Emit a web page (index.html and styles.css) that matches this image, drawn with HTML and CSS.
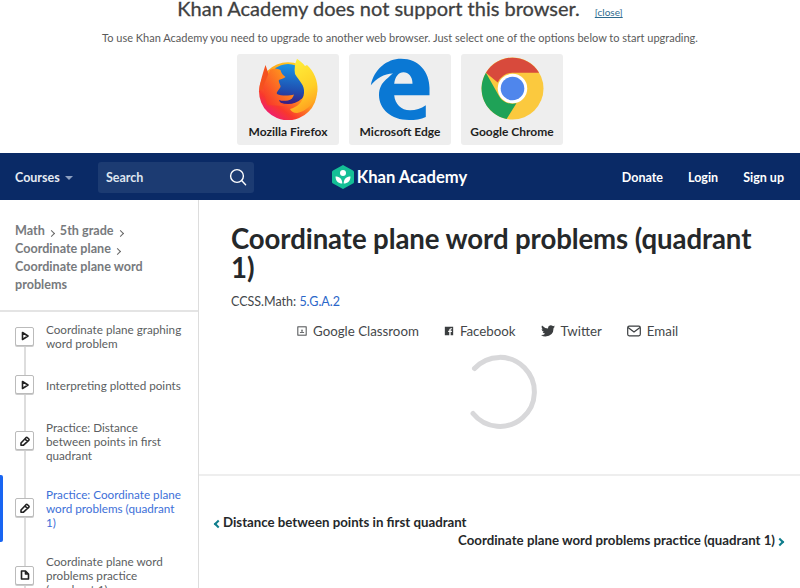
FILE: index.html
```html
<!DOCTYPE html>
<html lang="en">
<head>
<meta charset="utf-8">
<title>Coordinate plane word problems (quadrant 1)</title>
<link rel="stylesheet" href="styles.css">
</head>
<body>
<section class="banner">
  <div class="banner-head">
    <h2 class="banner-title">Khan Academy does not support this browser.</h2>
    <a class="banner-close">[close]</a>
  </div>
  <p class="banner-text">To use Khan Academy you need to upgrade to another web browser. Just select one of the options below to start upgrading.</p>
  <div class="browsers">
    <a class="browser">
      <svg class="browser-icon" viewBox="0 0 63 63">
        <defs>
          <linearGradient id="ff" x1="0.85" y1="0.15" x2="0.25" y2="0.95"><stop offset="0" stop-color="#ffd21f"/><stop offset="0.45" stop-color="#ff9a1f"/><stop offset="0.8" stop-color="#f9382c"/><stop offset="1" stop-color="#ee1f6e"/></linearGradient>
          <linearGradient id="fb" x1="0.6" y1="0" x2="0.5" y2="1"><stop offset="0" stop-color="#1a95e6"/><stop offset="0.65" stop-color="#1f4fb0"/><stop offset="1" stop-color="#3a1d80"/></linearGradient>
          <linearGradient id="fh" x1="0.8" y1="0.1" x2="0" y2="0.8"><stop offset="0" stop-color="#ff9e1c"/><stop offset="1" stop-color="#f8372b"/></linearGradient>
          <linearGradient id="fy" x1="0.3" y1="0" x2="0.6" y2="1"><stop offset="0" stop-color="#ffee3a"/><stop offset="0.6" stop-color="#ffcf26"/><stop offset="1" stop-color="#ff9a1f"/></linearGradient>
        </defs>
        <circle cx="31" cy="34.300" r="29" fill="url(#ff)"/>
        <path d="M8.500 8 C6 16 3 24 2.500 33 L16 30Z" fill="#f4511e"/>
        <circle cx="31" cy="27" r="20" fill="url(#fb)"/>
        <path d="M13 13 C17 11 21 12 23.500 13 C24 16 26 18 28.500 20 C26 22 23 22 22 23 C21 25 24 28 23.500 30 C22 33 19 35 20 37 C24 39 32 39 37 37.500 C36 41 34 43 31 43.500 C28 44 24 44 22 43 C23 46 25 48 28 49 L10 48 L6 30Z" fill="url(#fh)"/>
        <path d="M40 1.700 C43 4 46 6 48 9 L50 8 C57 14 61 24 60.500 33 C60 42 52 54 40 56 C36 56 34 54 33 52 C40 50 46 46 47 36 C48 28 42 24 38 17 C37 12 38 6 40 1.700Z" fill="url(#fy)"/>
      </svg>
      <span class="browser-name">Mozilla Firefox</span>
    </a>
    <a class="browser">
      <svg class="browser-icon" viewBox="0 0 63 63">
        <path d="M1.800 28.300 C5 12 18 1.700 32 1.700 C50 1.700 60.500 15 60.500 31 V38.300 H25.200 C26 47 32 53.300 41 53.300 C47 53.300 52 51.500 56.800 48.300 V60 C52 62.500 46 63 40 63 C22 63 10 52 10 38 C10 31 13 26 17 22.500 C20 20 22 17.500 24 16.500 C15 16.500 7 22 1.800 28.300Z M25.200 26.700 H43.500 C43.500 19.500 39.500 15.300 34.500 15.300 C29.500 15.300 26 20 25.200 26.700Z" fill="#0a78d4" fill-rule="evenodd"/>
      </svg>
      <span class="browser-name">Microsoft Edge</span>
    </a>
    <a class="browser">
      <svg class="browser-icon" viewBox="0 0 64 64">
        <circle cx="32" cy="32" r="31.500" fill="#fbc93e"/>
        <path d="M5 16 A31.500 31.500 0 0 1 59 16 L32 16 A16 16 0 0 0 17 26Z" fill="#d84a3c"/>
        <path d="M5 16 L18 39 A16 16 0 0 0 36 47 L26 63 A31.500 31.500 0 0 1 5 16Z" fill="#1fa257"/>
        <circle cx="32" cy="32" r="15" fill="#fff"/>
        <circle cx="32" cy="32" r="12" fill="#4f86ec"/>
      </svg>
      <span class="browser-name">Google Chrome</span>
    </a>
  </div>
</section>

<header class="nav">
  <div class="nav-left">
    <a class="courses">Courses<span class="caret"></span></a>
    <div class="search">
      <span>Search</span>
      <svg class="search-icon" viewBox="0 0 18 18"><circle cx="8" cy="8" r="6.400"/><path d="M12.600 12.600 L16.600 16.800"/></svg>
    </div>
  </div>
  <a class="logo">
    <svg class="logo-mark" viewBox="0 0 22 24">
      <path d="M11 0 L21 5.500 Q22 6 22 7 V17 Q22 18 21 18.500 L11 24 L1 18.500 Q0 18 0 17 V7 Q0 6 1 5.500Z" fill="#14bf96"/>
      <circle cx="11" cy="8" r="3" fill="#fff"/>
      <path d="M3.500 11.500 C7.500 11.500 10.300 14 10.300 18.500 C6.300 18.500 3.500 16 3.500 11.500Z M18.500 11.500 C14.500 11.500 11.700 14 11.700 18.500 C15.700 18.500 18.500 16 18.500 11.500Z" fill="#fff"/>
    </svg>
    <span>Khan Academy</span>
  </a>
  <nav class="nav-right">
    <a>Donate</a><a>Login</a><a>Sign up</a>
  </nav>
</header>

<div class="layout">
  <aside class="sidebar">
    <div class="crumbs">
      <div><a>Math</a><i class="crumb-sep"></i><a>5th grade</a><i class="crumb-sep"></i></div>
      <div><a>Coordinate plane</a><i class="crumb-sep"></i></div>
      <div><a>Coordinate plane word problems</a></div>
    </div>
    <ul class="items">
      <li class="item">
        <span class="item-icon"><svg viewBox="0 0 10 10"><path d="M2.500 1.500 L8 5 L2.500 8.500Z" class="glyph"/></svg></span>
        <span class="item-label">Coordinate plane graphing word problem</span>
      </li>
      <li class="item">
        <span class="item-icon"><svg viewBox="0 0 10 10"><path d="M2.500 1.500 L8 5 L2.500 8.500Z" class="glyph"/></svg></span>
        <span class="item-label">Interpreting plotted points</span>
      </li>
      <li class="item">
        <span class="item-icon"><svg viewBox="0 0 10 10"><path d="M1 7 L6 1.700 Q6.800 1 7.500 1.700 L8.800 3 Q9.300 3.700 8.700 4.300 L3.500 9.200 L1 9.200Z M5 3 L7.400 5.400" class="glyph"/></svg></span>
        <span class="item-label">Practice: Distance between points in first quadrant</span>
      </li>
      <li class="item item-active">
        <span class="item-icon"><svg viewBox="0 0 10 10"><path d="M1 7 L6 1.700 Q6.800 1 7.500 1.700 L8.800 3 Q9.300 3.700 8.700 4.300 L3.500 9.200 L1 9.200Z M5 3 L7.400 5.400" class="glyph"/></svg></span>
        <span class="item-label">Practice: Coordinate plane word problems (quadrant 1)</span>
      </li>
      <li class="item">
        <span class="item-icon"><svg viewBox="0 0 10 10"><path d="M1.500 1 H5.500 V4 H8.500 V9 H1.500Z M5.500 1 L8.500 4" class="glyph"/></svg></span>
        <span class="item-label">Coordinate plane word problems practice (quadrant 1)</span>
      </li>
    </ul>
  </aside>
  <main class="main">
    <div class="content">
      <h1 class="title">Coordinate plane word problems (quadrant 1)</h1>
      <p class="ccss">CCSS.Math: <a>5.G.A.2</a></p>
      <div class="share">
        <a class="share-link">
          <svg class="share-icon" viewBox="0 0 12 12"><rect x="1" y="1" width="10" height="10" fill="none" stroke="#3b3e40" stroke-width="1.100"/><path d="M3.500 8.500 H8.500 V7.500 H3.500Z M6 3.500 L7.200 6.500 H4.800Z" fill="#3b3e40"/></svg>Google Classroom</a>
        <a class="share-link">
          <svg class="share-icon" viewBox="0 0 12 12"><path d="M1 1 H11 V11 H8 V7.200 H9.400 L9.600 5.600 H8 V4.700 Q8 4 8.800 4 H9.700 V2.700 H8.400 Q6.300 2.700 6.300 4.600 V5.600 H5 V7.200 H6.300 V11 H1Z" fill="#3b3e40"/></svg>Facebook</a>
        <a class="share-link">
          <svg class="share-icon share-icon-wide" viewBox="0 0 14 12"><path d="M14 1.500 Q13.200 1.900 12.400 2 Q13.300 1.400 13.600 0.400 Q12.800 0.900 11.800 1.100 Q11 0.200 9.700 0.200 Q7.100 0.400 7 3 L7 3.600 Q3.500 3.400 1 0.600 Q-0.100 2.800 1.900 4.400 Q1.200 4.400 0.600 4 Q0.700 6.200 2.800 6.800 Q2.200 7 1.500 6.800 Q2.100 8.500 4.100 8.700 Q2.300 10.200 0 9.900 Q2 11.400 4.400 11.400 Q12.500 11.100 12.600 3 Q13.400 2.400 14 1.500Z" fill="#3b3e40"/></svg>Twitter</a>
        <a class="share-link">
          <svg class="share-icon share-icon-wide" viewBox="0 0 14 12"><rect x="0.700" y="1.200" width="12.600" height="9.600" rx="1.500" fill="none" stroke="#3b3e40" stroke-width="1.200"/><path d="M1 2.500 L7 7 L13 2.500" fill="none" stroke="#3b3e40" stroke-width="1.200"/></svg>Email</a>
      </div>
      <div class="spinner-wrap">
        <svg class="spinner" viewBox="0 0 76 76"><path d="M12.500 14.500 A34.500 34.500 0 1 1 11 59.500" fill="none" stroke="#d8d8da" stroke-width="5" stroke-linecap="round"/></svg>
      </div>
    </div>
    <div class="pager">
      <a class="pager-link"><span class="chev chev-left"></span>Distance between points in first quadrant</a>
      <a class="pager-link pager-next">Coordinate plane word problems practice (quadrant 1)<span class="chev chev-right"></span></a>
    </div>
  </main>
</div>
</body>
</html>
```
FILE: styles.css
```css
* { box-sizing: border-box; }
html, body { margin: 0; padding: 0; height: 588px; overflow: hidden; background: #fff; }
body { font-family: Lato, "Liberation Sans", sans-serif; color: #3b3e40; }
a { color: inherit; text-decoration: none; }
ul { list-style: none; margin: 0; padding: 0; }
h1, h2, p { margin: 0; }

.banner { height: 153px; display: flex; flex-direction: column; align-items: center; }
.banner-head { height: 20px; display: flex; align-items: flex-start; justify-content: center; gap: 15px; }
.banner-title { font-size: 20px; font-weight: 400; line-height: 17px; color: #3f3f3f; white-space: nowrap; -webkit-text-stroke: 0.300px #3f3f3f; }
.banner-close { font-size: 10px; line-height: 12px; color: #2d6a8e; text-decoration: underline; margin-top: 6px; }
.banner-text { margin-top: 11px; font-size: 11px; line-height: 14px; color: #5a5a5a; white-space: nowrap; }
.browsers { margin-top: 9px; display: flex; gap: 10px; }
.browser { width: 102px; height: 91px; background: #eee; border-radius: 3px; display: flex; flex-direction: column; align-items: center; padding-top: 3px; }
.browser-icon { width: 63px; height: 63px; display: block; }
.browser-name { margin-top: 4px; font-size: 12px; font-weight: 700; line-height: 15px; color: #1f1f1f; white-space: nowrap; }

.nav { height: 47px; background: #0a2a66; color: #fff; display: grid; grid-template-columns: 1fr auto 1fr; align-items: center; padding: 1px 16px 0 15px; font-size: 12.500px; font-weight: 700; }
.nav-left { display: flex; align-items: center; }
.courses { display: flex; align-items: center; width: 83px; color: #e6eaf2; }
.caret { margin-left: 5px; margin-top: 2px; border-left: 4px solid transparent; border-right: 4px solid transparent; border-top: 4px solid #8d9fc0; }
.search { width: 156px; height: 31px; background: #1c3b72; border-radius: 3px; display: flex; align-items: center; justify-content: space-between; padding: 0 7px 0 8px; color: #dfe5ef; }
.search-icon { width: 18px; height: 18px; fill: none; stroke: #fff; stroke-width: 1.400; stroke-linecap: round; }
.logo { display: flex; align-items: center; gap: 3px; font-size: 16.600px; font-weight: 700; }
.logo-mark { width: 22px; height: 24px; }
.nav-right { display: flex; justify-content: flex-end; gap: 25px; }

.layout { display: flex; height: 388px; }
.sidebar { width: 199px; flex: none; border-right: 1px solid #ddd; height: 388px; overflow: hidden; }
.crumbs { height: 112px; padding: 22px 15px 0; border-bottom: 2px solid #e4e4e4; font-size: 12.600px; font-weight: 700; line-height: 18px; color: #777a7d; }
.crumb-sep { display: inline-block; width: 5px; height: 5px; margin: 0 6px 0 4px; border-top: 1.500px solid #666; border-right: 1.500px solid #666; transform: translateY(1px) rotate(45deg); }
.items { position: relative; padding-top: 10px; }
.items::before { content: ""; position: absolute; left: 24px; top: 20px; bottom: 0; width: 2px; background: #ddd; }
.item { position: relative; display: flex; align-items: center; gap: 12px; padding: 0 15px; margin-bottom: 25.300px; }
.item-icon { position: relative; flex: none; width: 19px; height: 19px; background: #fff; border: 1px solid #bbb; border-radius: 2px; box-shadow: 0 1px 0 #ccc; display: flex; align-items: center; justify-content: center; }
.item-icon svg { width: 10px; height: 10px; }
.glyph { fill: none; stroke: #222; stroke-width: 1.600; stroke-linejoin: round; }
.item-label { font-size: 11.700px; line-height: 14px; color: #5b5e61; }
.item-active .item-label { color: #3d6fd8; }
.item-active::before { content: ""; position: absolute; left: 0; top: -12px; bottom: -13px; width: 3px; background: #1865f2; border-radius: 0 2px 2px 0; }

.main { flex: 1; min-width: 0; display: flex; flex-direction: column; }
.content { height: 276px; padding: 24px 32px 0; border-bottom: 2px solid #eee; }
.title { font-size: 27.600px; font-weight: 700; line-height: 29px; color: #25282a; letter-spacing: -0.100px; }
.ccss { margin-top: 12px; font-size: 12.500px; line-height: 16px; color: #44474a; }
.ccss a { color: #2a66c9; }
.share { margin: 12px 0 0 66px; display: flex; gap: 25px; font-size: 13.300px; line-height: 18px; color: #44474a; }
.share-link { display: flex; align-items: center; gap: 6px; }
.share-icon { width: 10px; height: 10px; flex: none; }
.share-icon-wide { width: 14px; height: 12px; }
.spinner-wrap { margin-top: 14px; display: flex; justify-content: center; }
.spinner { width: 76px; height: 76px; overflow: visible; }
.pager { display: flex; flex-direction: column; padding: 37px 16px 0 15px; font-size: 13.250px; font-weight: 700; line-height: 18px; color: #25282a; }
.pager-next { align-self: flex-end; }
.chev { display: inline-block; width: 6px; height: 6px; border-top: 2px solid #0f7d8c; border-right: 2px solid #0f7d8c; }
.chev-left { margin-right: 3px; transform: translateX(1px) rotate(-135deg); }
.chev-right { margin-left: 3px; transform: translateX(-1px) rotate(45deg); }
```
